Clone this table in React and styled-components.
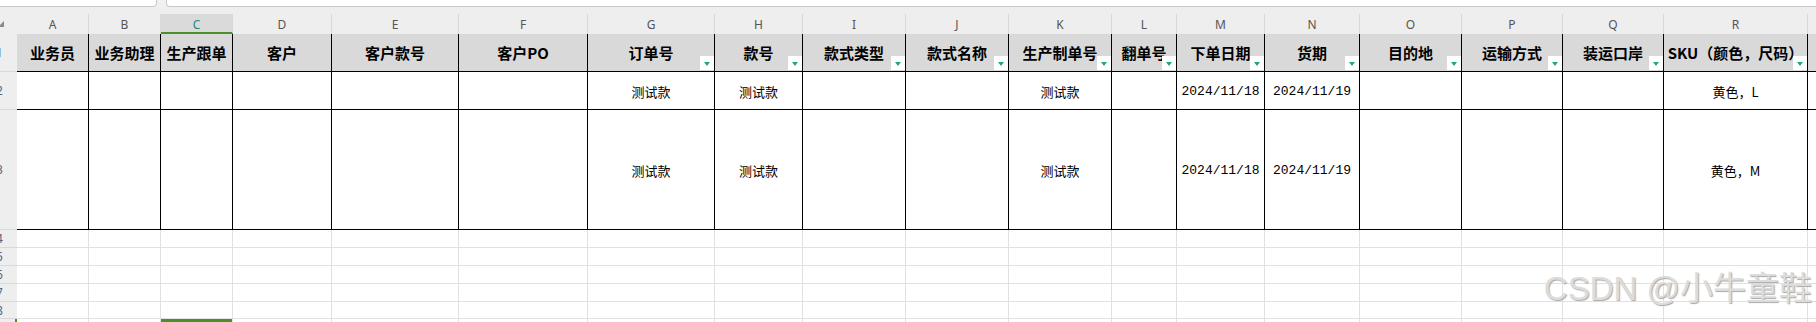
import React from 'react';
import styled, { createGlobalStyle, css } from 'styled-components';

const GlobalStyle = createGlobalStyle`
  html, body {
    margin: 0;
    padding: 0;
    background: #ffffff;
    overflow: hidden;
  }
  * {
    box-sizing: border-box;
  }
`;

const columns = [
  { letter: 'A', width: 72, title: '业务员' },
  { letter: 'B', width: 72, title: '业务助理' },
  { letter: 'C', width: 72, title: '生产跟单' },
  { letter: 'D', width: 99, title: '客户' },
  { letter: 'E', width: 127, title: '客户款号' },
  { letter: 'F', width: 129, title: '客户PO' },
  { letter: 'G', width: 127, title: '订单号', filter: true },
  { letter: 'H', width: 88, title: '款号', filter: true },
  { letter: 'I', width: 103, title: '款式类型', filter: true },
  { letter: 'J', width: 103, title: '款式名称', filter: true },
  { letter: 'K', width: 103, title: '生产制单号', filter: true },
  { letter: 'L', width: 65, title: '翻单号', filter: true },
  { letter: 'M', width: 88, title: '下单日期', filter: true },
  { letter: 'N', width: 95, title: '货期', filter: true },
  { letter: 'O', width: 102, title: '目的地', filter: true },
  { letter: 'P', width: 101, title: '运输方式', filter: true },
  { letter: 'Q', width: 101, title: '装运口岸', filter: true },
  { letter: 'R', width: 144, title: 'SKU（颜色，尺码）', filter: true },
  { letter: 'S', width: 80, title: '' },
];

const dataRows = [
  { num: 2, height: 38, cells: { G: '测试款', H: '测试款', K: '测试款', M: '2024/11/18', N: '2024/11/19', R: '黄色，L' } },
  { num: 3, height: 120, cells: { G: '测试款', H: '测试款', K: '测试款', M: '2024/11/18', N: '2024/11/19', R: '黄色，M' } },
];

const emptyRows = [
  { num: 4, height: 18 },
  { num: 5, height: 18 },
  { num: 6, height: 18 },
  { num: 7, height: 18 },
  { num: 8, height: 17 },
];

const SELECTED = 'C';

export default function App() {
  const template = `17px ${columns.map(c => `${c.width}px`).join(' ')}`;
  const rowTemplate = `27px 38px ${dataRows.map(r => `${r.height}px`).join(' ')} ${emptyRows
    .map(r => `${r.height}px`)
    .join(' ')} 3px`;

  return (
    <>
      <GlobalStyle />
      <Sheet>
        <TopBar>
          <NameBox />
          <FormulaBox />
        </TopBar>
        <Grid style={{ gridTemplateColumns: template, gridTemplateRows: rowTemplate }}>
          <Corner>
            <CornerMark />
          </Corner>
          {columns.map(c => (
            <ColHead key={c.letter}>
              <ColLetter $selected={c.letter === SELECTED}>{c.letter}</ColLetter>
            </ColHead>
          ))}

          <RowHead>
            <RowNum>1</RowNum>
          </RowHead>
          {columns.map(c => (
            <HeadCell key={c.letter}>
              {c.title}
              {c.filter && (
                <FilterButton>
                  <FilterArrow />
                </FilterButton>
              )}
            </HeadCell>
          ))}

          {dataRows.map(r => (
            <React.Fragment key={r.num}>
              <RowHead>
                <RowNum>{r.num}</RowNum>
              </RowHead>
              {columns.map(c => {
                const v = r.cells[c.letter] || '';
                return (
                  <DataCell key={c.letter} $mono={/^\d{4}\//.test(v)}>
                    {v}
                  </DataCell>
                );
              })}
            </React.Fragment>
          ))}

          {emptyRows.map(r => (
            <React.Fragment key={r.num}>
              <RowHead>
                <RowNum>{r.num}</RowNum>
              </RowHead>
              {columns.map(c => (
                <BlankCell key={c.letter} />
              ))}
            </React.Fragment>
          ))}

          <EdgeHead />
          {columns.map(c => (
            <EdgeCell key={c.letter} $selected={c.letter === SELECTED} />
          ))}
        </Grid>
        <Watermark>CSDN @小牛童鞋</Watermark>
      </Sheet>
    </>
  );
}

const Sheet = styled.div`
  position: relative;
  width: 1816px;
  height: 322px;
  overflow: hidden;
  background: #ffffff;
  font-family: 'Noto Sans CJK SC', 'Noto Sans', sans-serif;
`;

const TopBar = styled.div`
  display: flex;
  height: 7px;
  background: #f0f0f0;
`;

const NameBox = styled.div`
  width: 157px;
  height: 7px;
  background: #ffffff;
  border-right: 1px solid #c8c8c8;
  border-bottom: 1px solid #c8c8c8;
  border-bottom-right-radius: 4px;
`;

const FormulaBox = styled.div`
  flex: 1;
  height: 7px;
  margin-left: 9px;
  background: #ffffff;
  border-left: 1px solid #c8c8c8;
  border-bottom: 1px solid #c8c8c8;
  border-bottom-left-radius: 4px;
`;

const Grid = styled.div`
  display: grid;
  width: 1816px;
`;

const Corner = styled.div`
  position: relative;
  background: #eeeeee;
  overflow: hidden;
`;

const CornerMark = styled.div`
  position: absolute;
  left: -2px;
  top: 14px;
  width: 0;
  height: 0;
  border-left: 6px solid transparent;
  border-bottom: 6px solid #8a8a8a;
`;

const ColHead = styled.div`
  display: flex;
  align-items: flex-end;
  background: #eeeeee;
`;

const ColLetter = styled.div`
  width: 100%;
  height: 20px;
  display: flex;
  align-items: center;
  justify-content: center;
  font-family: 'Noto Sans', 'Open Sans', sans-serif;
  font-size: 12px;
  color: #555555;
  border-right: 1px solid #d9d9d9;
  ${p =>
    p.$selected &&
    css`
      background: #dadada;
      color: #1e8a72;
      border-bottom: 2px solid #4a8f29;
      padding-top: 2px;
    `}
`;

const RowHead = styled.div`
  display: flex;
  align-items: center;
  background: #eeeeee;
  border-bottom: 1px solid #d9d9d9;
  overflow: hidden;
`;

const RowNum = styled.span`
  margin-left: -4px;
  font-family: 'Noto Sans', 'Open Sans', sans-serif;
  font-size: 12px;
  color: #5a6372;
`;

const cellBase = css`
  display: flex;
  align-items: center;
  justify-content: center;
  white-space: nowrap;
  overflow: hidden;
  color: #000000;
`;

const HeadCell = styled.div`
  ${cellBase};
  position: relative;
  background: #d9d9d9;
  border-right: 1px solid #000000;
  border-bottom: 1px solid #000000;
  font-size: 15px;
  font-weight: 700;
  padding-bottom: 1px;
`;

const FilterButton = styled.div`
  position: absolute;
  right: 0;
  bottom: 1px;
  width: 14px;
  height: 14px;
  background: #ffffff;
  display: flex;
  align-items: center;
  justify-content: center;
`;

const FilterArrow = styled.div`
  width: 0;
  height: 0;
  border-left: 3.5px solid transparent;
  border-right: 3.5px solid transparent;
  border-top: 4px solid #1fa87a;
  margin-top: 1px;
`;

const DataCell = styled.div`
  ${cellBase};
  background: #ffffff;
  border-right: 1px solid #000000;
  border-bottom: 1px solid #000000;
  font-size: 13px;
  padding-top: 2px;
  ${p =>
    p.$mono &&
    css`
      font-family: 'Liberation Mono', monospace;
      font-size: 13px;
    `}
`;

const BlankCell = styled.div`
  background: #ffffff;
  border-right: 1px solid #e1e1e1;
  border-bottom: 1px solid #e1e1e1;
`;

const EdgeHead = styled.div`
  background: #eeeeee;
  border-right: 2px solid #4a8f29;
`;

const EdgeCell = styled.div`
  background: ${p => (p.$selected ? '#4a8f29' : '#ffffff')};
  border-right: 1px solid #e1e1e1;
`;

const Watermark = styled.div`
  position: absolute;
  right: 4px;
  bottom: 17px;
  font-family: 'Liberation Sans', 'Noto Sans CJK SC', sans-serif;
  font-size: 33px;
  line-height: 1;
  color: #dcdcdc;
  text-shadow: 1px 1px 1px #a9a9a9;
  white-space: nowrap;
  pointer-events: none;
`;
